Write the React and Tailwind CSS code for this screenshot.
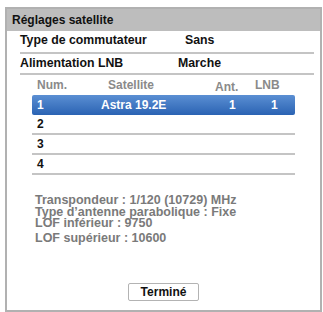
export default function App() {
  const rows = [
    { num: '1', sat: 'Astra 19.2E', ant: '1', lnb: '1', selected: true },
    { num: '2' },
    { num: '3' },
    { num: '4' },
  ]

  return (
    <div className="w-[323px] h-[312px] bg-white pt-[7px] pl-[5px] font-['Liberation_Sans',Arial,sans-serif] font-bold">
      <div className="w-[317px] h-[305px] border-2 border-[#b1b1b1] flex flex-col">
        {/* Title bar */}
        <div className="h-[22px] bg-[#bdbdbd] flex items-center px-[5px] text-[12px] text-[#111]">
          Réglages satellite
        </div>

        <div className="flex-1 flex flex-col pl-[13px] pr-[6px]">
          {/* Settings */}
          <div className="h-[23px] flex items-end pb-[3px] border-b-2 border-[#c4c4c4] text-[12.3px] text-[#111]">
            <span className="w-[165px]">Type de commutateur</span>
            <span>Sans</span>
          </div>
          <div className="h-[21px] flex items-center border-b-2 border-[#c4c4c4] text-[12.3px] text-[#111]">
            <span className="w-[158px]">Alimentation LNB</span>
            <span>Marche</span>
          </div>

          {/* Table */}
          <div className="ml-[12px] w-[263px] flex flex-col">
            <div className="h-[20px] flex items-center text-[12px] text-[#8a8a8a]">
              <span className="w-[76px] pl-[5px]">Num.</span>
              <span className="w-[107px]">Satellite</span>
              <span className="w-[40px] pt-[3px]">Ant.</span>
              <span>LNB</span>
            </div>
            {rows.map(r =>
              r.selected ? (
                <div
                  key={r.num}
                  className="h-[20px] flex items-center rounded-[2px] bg-gradient-to-b from-[#5b8fd3] to-[#2a63b3] text-white text-[12px]"
                >
                  <span className="w-[69px] pl-[5px]">{r.num}</span>
                  <span className="w-[128px]">{r.sat}</span>
                  <span className="w-[42px]">{r.ant}</span>
                  <span>{r.lnb}</span>
                </div>
              ) : (
                <div
                  key={r.num}
                  className="h-[20px] flex items-center border-b-2 border-[#c4c4c4] text-[12px] text-[#111] pl-[5px]"
                >
                  {r.num}
                </div>
              )
            )}
          </div>

          {/* Info */}
          <div className="mt-[19px] ml-[15px] text-[12.5px] leading-[12px] text-[#7a7a7a]">
            <p>Transpondeur : 1/120 (10729) MHz</p>
            <p>Type d’antenne parabolique : Fixe</p>
            <p className="leading-[11px]">LOF inférieur : 9750</p>
            <p className="mt-[3px]">LOF supérieur : 10600</p>
          </div>

          <div className="flex-1" />

          <div className="flex justify-center pr-[7px] mb-[9px]">
            <div className="w-[71px] h-[18px] border border-[#b3b3b3] rounded-[2px] flex items-center justify-center text-[12px] text-[#111]">
              Terminé
            </div>
          </div>
        </div>
      </div>
    </div>
  )
}
